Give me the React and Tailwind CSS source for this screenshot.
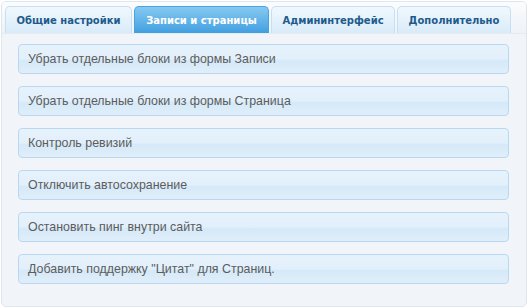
const tabs = [
  { label: 'Общие настройки', w: 'w-[127px]' },
  { label: 'Записи и страницы', w: 'w-[135px]', active: true },
  { label: 'Админинтерфейс', w: 'w-[124px]' },
  { label: 'Дополнительно', w: 'w-[114px]' },
]

const rows = [
  'Убрать отдельные блоки из формы Записи',
  'Убрать отдельные блоки из формы Страница',
  'Контроль ревизий',
  'Отключить автосохранение',
  'Остановить пинг внутри сайта',
  'Добавить поддержку "Цитат" для Страниц.',
]

export default function App() {
  return (
    <div className="w-[528px] h-[308px] bg-white p-px">
      <div className="h-[306px] rounded-[5px] border border-[#dfe6ed] bg-[#f1f5f9] overflow-hidden">
        {/* tabs */}
        <div className="flex items-end gap-[2px] pl-[3px] h-[32px] bg-gradient-to-b from-[#fbfcfd] to-[#eef3f7] border-b border-[#e4ebf1] font-[family-name:'DejaVu_Sans',Verdana,sans-serif] font-bold text-[10px]">
          {tabs.map((t) =>
            t.active ? (
              <div
                key={t.label}
                className={`${t.w} h-[27px] rounded-t-[5px] border border-b-0 border-[#4aa3e0] bg-gradient-to-b from-[#86c9f1] to-[#3f9fe0] flex items-center justify-center text-white`}
              >
                {t.label}
              </div>
            ) : (
              <div
                key={t.label}
                className={`${t.w} h-[27px] rounded-t-[5px] border border-b-0 border-[#c6dff2] bg-gradient-to-b from-[#f1f8fd] to-[#d9ebf9] flex items-center justify-center text-[#1d5b8c]`}
              >
                {t.label}
              </div>
            )
          )}
        </div>

        {/* rows */}
        <div className="flex flex-col gap-[12px] pt-[10px] pl-[16px] pr-[17px] font-[family-name:'Liberation_Sans',Arial,sans-serif] text-[12.4px] text-[#5c5c5c]">
          {rows.map((r) => (
            <div
              key={r}
              className="h-[30px] rounded-[4px] border border-[#b9d8f0] bg-[linear-gradient(to_bottom,#e6f2fc_0%,#e2f0fb_50%,#d5e9f8_55%,#e0eefa_100%)] flex items-center pl-[9px]"
            >
              {r}
            </div>
          ))}
        </div>
      </div>
    </div>
  )
}
